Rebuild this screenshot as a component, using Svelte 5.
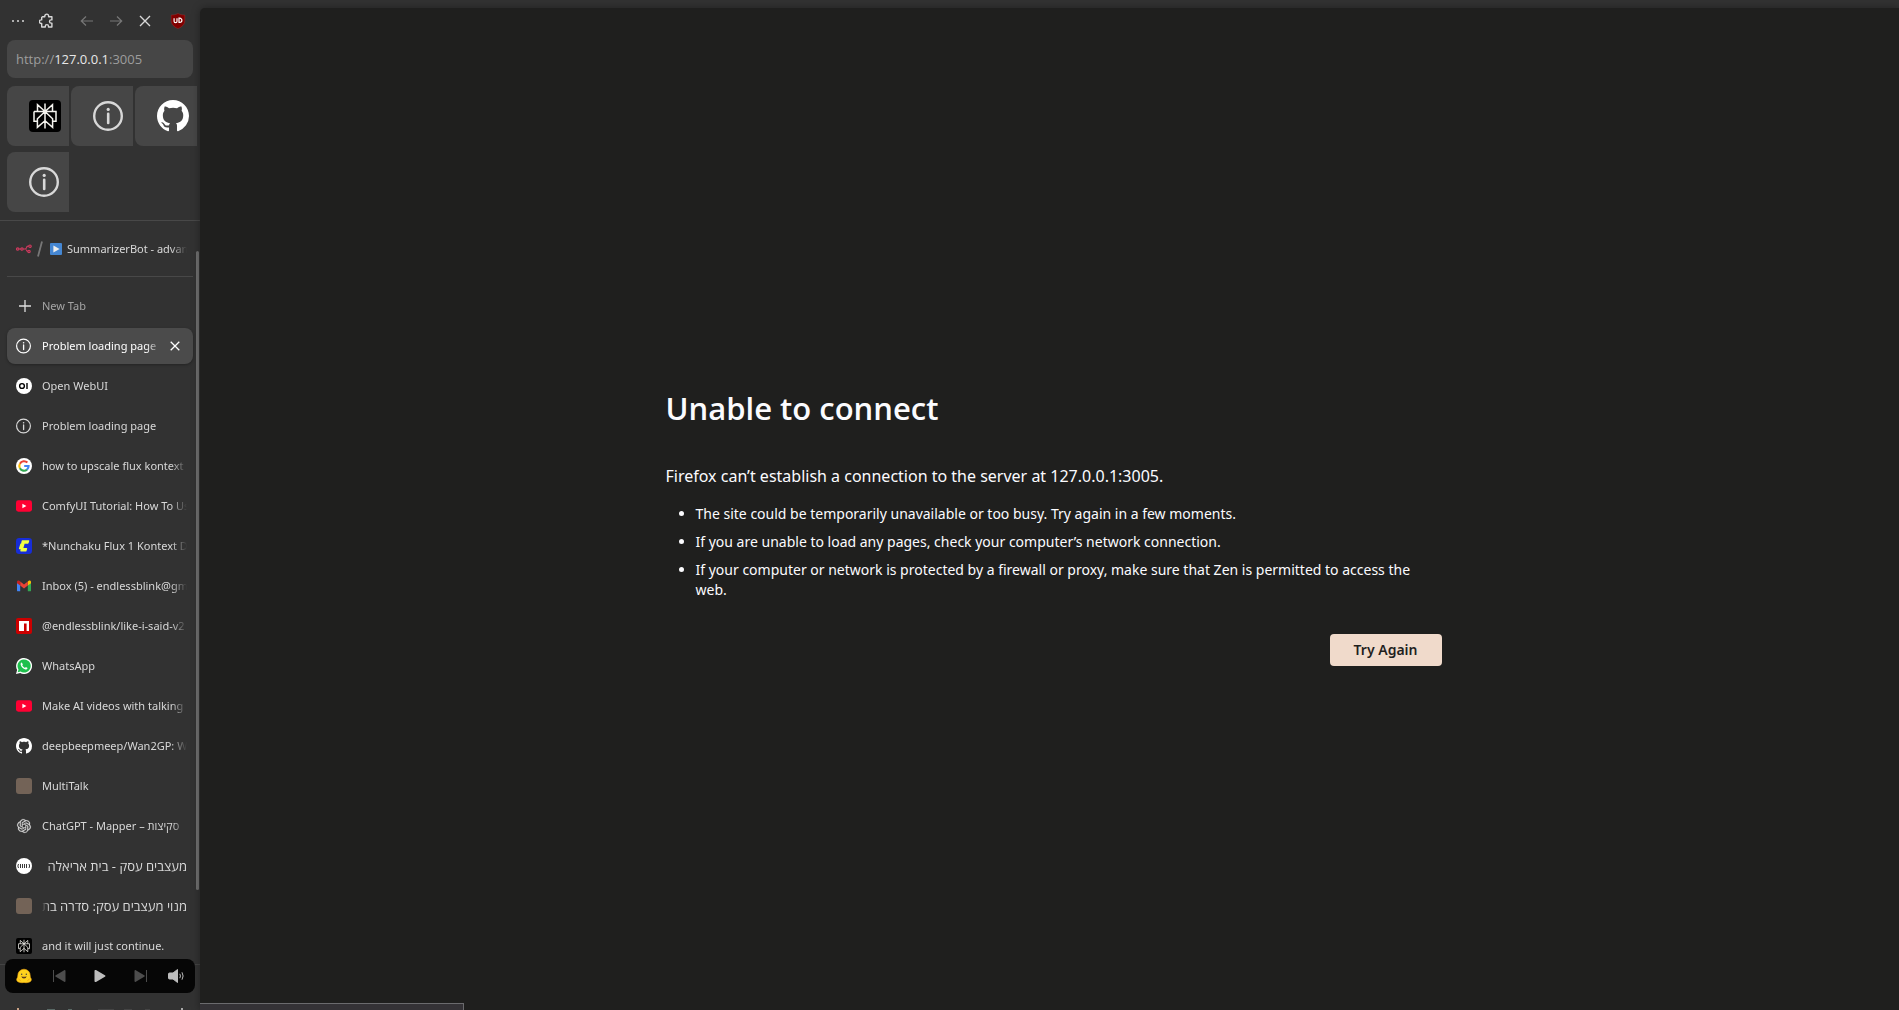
<script>
  const url = 'http://127.0.0.1:3005';
  let address = $state('');
  let editing = $state(false);

  const essentials = [
    { icon: 'perplexity', name: 'Perplexity' },
    { icon: 'info', name: 'Problem loading page' },
    { icon: 'github', name: 'GitHub' },
    { icon: 'info', name: 'Problem loading page' }
  ];

  const tabs = [
    { icon: 'info', title: 'Problem loading page', active: true },
    { icon: 'openwebui', title: 'Open WebUI' },
    { icon: 'info', title: 'Problem loading page' },
    { icon: 'google', title: 'how to upscale flux kontext' },
    { icon: 'youtube', title: 'ComfyUI Tutorial: How To Use' },
    { icon: 'comfy', title: '*Nunchaku Flux 1 Kontext Dev' },
    { icon: 'gmail', title: 'Inbox (5) - endlessblink@gmail' },
    { icon: 'npm', title: '@endlessblink/like-i-said-v2' },
    { icon: 'whatsapp', title: 'WhatsApp' },
    { icon: 'youtube', title: 'Make AI videos with talking' },
    { icon: 'github', title: 'deepbeepmeep/Wan2GP: Wan' },
    { icon: 'blank', title: 'MultiTalk' },
    { icon: 'openai', title: 'ChatGPT - Mapper – סקיצות' },
    { icon: 'library', title: 'מעצבים עסק - בית אריאלה', rtl: true },
    { icon: 'blank', title: 'מנוי מעצבים עסק: סדרה בת', rtl: true },
    { icon: 'perplexity', title: 'and it will just continue.' }
  ];
</script>

{#snippet icon(name)}
  {#if name === 'info'}
    <svg class="icon" viewBox="0 0 16 16" fill="none" stroke="currentColor" stroke-width="1.2" aria-hidden="true">
      <circle cx="7.5" cy="8" r="6.9" />
      <path d="M7.6 6.9v4.6" stroke-width="1.3" stroke-linecap="round" />
      <circle cx="7.6" cy="4.7" r=".8" fill="currentColor" stroke="none" />
    </svg>
  {:else if name === 'perplexity'}
    <svg class="icon" viewBox="0 0 32 32" fill="none" stroke="#f4f3ee" stroke-width="1.5" aria-hidden="true">
      <rect width="32" height="32" rx="4" fill="#000" stroke="none" />
      <path d="M16 3.5v25M16 11.5L8.5 4.8v6.7M16 11.5l7.5-6.7v6.7M5 11.5h22v9.8h-3.4M8.4 21.3H5v-9.8M16 11.5l-7.6 7.3v8.6l7.6-6.6M16 11.5l7.6 7.3v8.6L16 20.8" />
    </svg>
  {:else if name === 'github'}
    <svg class="icon" viewBox="0 0 16 16" fill="#fff" aria-hidden="true">
      <path d="M8 0C3.58 0 0 3.58 0 8c0 3.54 2.29 6.53 5.47 7.59.4.07.55-.17.55-.38 0-.19-.01-.82-.01-1.49-2.01.37-2.53-.49-2.69-.94-.09-.23-.48-.94-.82-1.13-.28-.15-.68-.52-.01-.53.63-.01 1.08.58 1.23.82.72 1.21 1.87.87 2.33.66.07-.52.28-.87.51-1.07-1.78-.2-3.64-.89-3.64-3.95 0-.87.31-1.59.82-2.15-.08-.2-.36-1.02.08-2.12 0 0 .67-.21 2.2.82.64-.18 1.32-.27 2-.27s1.36.09 2 .27c1.53-1.04 2.2-.82 2.2-.82.44 1.1.16 1.92.08 2.12.51.56.82 1.27.82 2.15 0 3.07-1.87 3.75-3.65 3.95.29.25.54.73.54 1.48 0 1.07-.01 1.93-.01 2.2 0 .21.15.46.55.38A8.01 8.01 0 0 0 16 8c0-4.42-3.58-8-8-8z" />
    </svg>
  {:else if name === 'openwebui'}
    <svg class="icon" viewBox="0 0 16 16" aria-hidden="true">
      <circle cx="8" cy="8" r="8" fill="#fff" />
      <circle cx="6" cy="8" r="2.4" fill="none" stroke="#000" stroke-width="1.4" />
      <path d="M11 5v6" stroke="#000" stroke-width="1.4" />
    </svg>
  {:else if name === 'google'}
    <svg class="icon" viewBox="0 0 16 16" fill="none" stroke-width="2.1" aria-hidden="true">
      <circle cx="8" cy="8" r="8" fill="#fff" />
      <path d="M11.4 4.6A4.7 4.7 0 0 0 3.9 5.7" stroke="#ea4335" />
      <path d="M3.9 5.7a4.7 4.7 0 0 0 0 4.6" stroke="#fbbc05" />
      <path d="M3.9 10.3a4.7 4.7 0 0 0 7.1 1.3" stroke="#34a853" />
      <path d="M11 11.6A4.7 4.7 0 0 0 12.6 8H8.2" stroke="#4285f4" />
    </svg>
  {:else if name === 'youtube'}
    <svg class="icon" viewBox="0 0 16 16" aria-hidden="true">
      <rect y="2.3" width="16" height="11.4" rx="2.4" fill="#ff0033" />
      <path d="M6.4 5.8v4.4L10.4 8z" fill="#fff" />
    </svg>
  {:else if name === 'comfy'}
    <svg class="icon" viewBox="0 0 16 16" aria-hidden="true">
      <rect width="16" height="16" rx="3.2" fill="#172dd7" />
      <path d="M6.3 2.2h6.4c.5 0 .7.3.6.7l-.7 2.2c-.1.4-.4.6-.8.6H8.6L7.4 10.1h3.2c.5 0 .7.3.6.7l-.7 2.2c-.1.4-.4.6-.8.6H5c-.6 0-.8-.3-.7-.8l.4-1.5H3.5c-.5 0-.7-.3-.6-.7L4.3 5.9c.1-.4.4-.5.8-.5l.5-2.5c.1-.4.3-.7.7-.7z" fill="#f0ff41" />
    </svg>
  {:else if name === 'gmail'}
    <svg class="icon" viewBox="0 0 16 16" aria-hidden="true">
      <path d="M1 4v8.4c0 .5.4.9.9.9h2.3V6.5z" fill="#4285f4" />
      <path d="M15 4v8.4c0 .5-.4.9-.9.9h-2.3V6.5z" fill="#34a853" />
      <path d="M11.8 3.6v4L15 5.2V4c0-1.4-1.5-1.9-2.5-1.1z" fill="#fbbc04" />
      <path d="M4.2 7.6v-4L8 6.5l3.8-2.9v4L8 10.5z" fill="#ea4335" />
      <path d="M1 4v1.2l3.2 2.4v-4l-.7-.7C2.5 2.1 1 2.6 1 4z" fill="#c5221f" />
    </svg>
  {:else if name === 'npm'}
    <svg class="icon" viewBox="0 0 16 16" aria-hidden="true">
      <rect width="16" height="16" rx="2" fill="#c00" />
      <path d="M3 3h10v10h-2.4V5.5H8V13H3z" fill="#fff" />
    </svg>
  {:else if name === 'whatsapp'}
    <svg class="icon" viewBox="0 0 16 16" aria-hidden="true">
      <path d="M0 16l1.1-4.1A8 8 0 1 1 4.2 15z" fill="#fff" />
      <path d="M1.7 14.3l.8-2.8a6.6 6.6 0 1 1 2.1 2.1z" fill="#1fc04d" />
      <path d="M5.8 4.5c-.9.3-1.4 1.2-1.1 2.2.7 2.4 2.3 4.1 4.8 4.8 1 .2 2-.5 2.1-1.5L9.8 9l-.8.9C7.7 9.3 6.8 8.4 6.2 7.2L6.9 6.4z" fill="#fff" />
    </svg>
  {:else if name === 'openai'}
    <svg class="icon" viewBox="-2 -2 28 28" fill="#d8d8d8" stroke="#d8d8d8" stroke-width=".4" aria-hidden="true">
      <path d="M22.2819 9.8211a5.9847 5.9847 0 0 0-.5157-4.9108 6.0462 6.0462 0 0 0-6.5098-2.9A6.0651 6.0651 0 0 0 4.9807 4.1818a5.9847 5.9847 0 0 0-3.9977 2.9 6.0462 6.0462 0 0 0 .7427 7.0966 5.98 5.98 0 0 0 .511 4.9107 6.051 6.051 0 0 0 6.5146 2.9001A5.9847 5.9847 0 0 0 13.2599 24a6.0557 6.0557 0 0 0 5.7718-4.2058 5.9894 5.9894 0 0 0 3.9977-2.9001 6.0557 6.0557 0 0 0-.7475-7.0729zm-9.022 12.6081a4.4755 4.4755 0 0 1-2.8764-1.0408l.1419-.0804 4.7783-2.7582a.7948.7948 0 0 0 .3927-.6813v-6.7369l2.02 1.1686a.071.071 0 0 1 .038.052v5.5826a4.504 4.504 0 0 1-4.4945 4.4944zm-9.6607-4.1254a4.4708 4.4708 0 0 1-.5346-3.0137l.142.0852 4.783 2.7582a.7712.7712 0 0 0 .7806 0l5.8428-3.3685v2.3324a.0804.0804 0 0 1-.0332.0615L9.74 19.9502a4.4992 4.4992 0 0 1-6.1408-1.6464zM2.3408 7.8956a4.485 4.485 0 0 1 2.3655-1.9728V11.6a.7664.7664 0 0 0 .3879.6765l5.8144 3.3543-2.0201 1.1685a.0757.0757 0 0 1-.071 0l-4.8303-2.7865A4.504 4.504 0 0 1 2.3408 7.872zm16.5963 3.8558L13.1038 8.364 15.1192 7.2a.0757.0757 0 0 1 .071 0l4.8303 2.7913a4.4944 4.4944 0 0 1-.6765 8.1042v-5.6772a.79.79 0 0 0-.407-.667zm2.0107-3.0231l-.142-.0852-4.7735-2.7818a.7759.7759 0 0 0-.7854 0L9.409 9.2297V6.8974a.0662.0662 0 0 1 .0284-.0615l4.8303-2.7866a4.4992 4.4992 0 0 1 6.6802 4.66zM8.3065 12.863l-2.02-1.1638a.0804.0804 0 0 1-.038-.0567V6.0742a4.4992 4.4992 0 0 1 7.3757-3.4537l-.142.0805L8.704 5.459a.7948.7948 0 0 0-.3927.6813zm1.0976-2.3654l2.602-1.4998 2.6069 1.4998v2.9994l-2.5974 1.4997-2.6067-1.4997Z" />
    </svg>
  {:else if name === 'library'}
    <svg class="icon" viewBox="0 0 16 16" fill="none" stroke="#222" stroke-width=".9" aria-hidden="true">
      <circle cx="8" cy="8" r="8" fill="#fff" stroke="none" />
      <path d="M4.5 6v4M6.5 6v4M8.5 6v4M10.5 6v4M2.5 6q-1.3 2 0 4M13 6q1.3 2 0 4" />
    </svg>
  {:else}
    <svg class="icon" viewBox="0 0 16 16" aria-hidden="true">
      <rect width="16" height="16" rx="3" fill="#736357" />
    </svg>
  {/if}
{/snippet}

<div class="browser">
  <aside class="sidebar">
    <div class="toolbar">
      <button class="tool" aria-label="Menu">
        <svg viewBox="0 0 16 16" fill="currentColor"><circle cx="3" cy="8" r="1" /><circle cx="8" cy="8" r="1" /><circle cx="13" cy="8" r="1" /></svg>
      </button>
      <button class="tool extensions" aria-label="Extensions">
        <svg viewBox="0 0 16 16" fill="none" stroke="currentColor" stroke-width="1.4" stroke-linejoin="round">
          <path d="M3.5 3.7h2.3V3a1.9 1.9 0 0 1 3.8 0v.7h3.3v3.2h-.8a1.6 1.6 0 0 0 0 3.2h.8v3.9H9.5v-.8a1.6 1.6 0 0 0-3.2 0v.8H2.7v-3.5H2.2a1.8 1.8 0 0 1 0-3.6h.5V4.5z" />
        </svg>
      </button>
      <button class="tool dim" aria-label="Back">
        <svg viewBox="0 0 16 16" fill="none" stroke="currentColor" stroke-width="1.2"><path d="M14 8H2.5M7 3.5L2.3 8 7 12.5" /></svg>
      </button>
      <button class="tool dim" aria-label="Forward">
        <svg viewBox="0 0 16 16" fill="none" stroke="currentColor" stroke-width="1.2"><path d="M2 8h11.5M9 3.5L13.7 8 9 12.5" /></svg>
      </button>
      <button class="tool" aria-label="Stop">
        <svg viewBox="0 0 16 16" fill="none" stroke="currentColor" stroke-width="1.4"><path d="M3 3l10 10M13 3L3 13" /></svg>
      </button>
      <button class="tool ublock" aria-label="uBlock Origin">
        <svg viewBox="0 0 16 16">
          <path d="M8 .4C6.2 1.6 3.8 2 1.2 2v5.5c0 4 2.8 6.4 6.8 8.1 4-1.7 6.8-4.1 6.8-8.1V2C12.2 2 9.8 1.6 8 .4z" fill="#800000" stroke="#a33" stroke-width=".4" />
          <path d="M4.1 5.2v3a1.3 1.3 0 0 0 2.9 0v-3M9 5.2v4.2h.8a2.1 2.1 0 0 0 0-4.2z" fill="none" stroke="#fff" stroke-width="1.2" />
        </svg>
      </button>
    </div>

    <div class="address">
      <input
        aria-label="Address"
        bind:value={address}
        onfocus={() => { editing = true; address = url; }}
        onblur={() => { editing = false; address = ''; }}
      />
      {#if !editing}
        <span class="shown">http://<b>127.0.0.1</b>:3005</span>
      {/if}
    </div>

    <div class="essentials">
      {#each essentials as item}
        <button class="essential" aria-label={item.name}>{@render icon(item.icon)}</button>
      {/each}
    </div>

    <div class="pinned">
      <button class="tab">
        <svg class="icon" viewBox="0 0 16 16" fill="none" stroke="#cf3a5e" stroke-width="1.2" aria-hidden="true">
          <circle cx="1.7" cy="8" r="1.2" /><circle cx="6" cy="8" r="1.2" />
          <path d="M2.9 8h1.9M7.2 8h1.8q1.2 0 1.5-1.3.3-1.5 1.5-1.5h.8M9 8q1.2 0 1.5 1.2.3 1.2 1.3 1.2" />
          <circle cx="14" cy="5.2" r="1.2" /><circle cx="13" cy="10.5" r="1.2" />
        </svg>
        <svg class="slash" viewBox="0 0 6 16" fill="none" stroke="#777" stroke-width="1.8" aria-hidden="true"><path d="M5 .5L1 15.5" /></svg>
        <svg class="play-badge" viewBox="0 0 12 12" aria-hidden="true"><rect width="12" height="12" rx="1" fill="#4587d3" /><path d="M3.4 2.5v7L9.6 6z" fill="#eee" /></svg>
        <span class="title">SummarizerBot - advanced</span>
      </button>
    </div>

    <div class="tabs">
      <button class="tab new-tab">
        <svg class="icon" viewBox="0 0 16 16" fill="none" stroke="#ddd" stroke-width="1.3" aria-hidden="true"><path d="M9 2v12M3 8h12" /></svg>
        <span class="title">New Tab</span>
      </button>
      {#each tabs as tab}
        <div class="row" class:active={tab.active}>
          <button class="tab">
            {@render icon(tab.icon)}
            <span class="title" class:rtl={tab.rtl} dir={tab.rtl ? 'rtl' : 'ltr'}>{tab.title}</span>
          </button>
          {#if tab.active}
            <button class="close" aria-label="Close tab">
              <svg viewBox="0 0 10 10" fill="none" stroke="currentColor" stroke-width="1.3"><path d="M.7.7l8.6 8.6M9.3.7L.7 9.3" /></svg>
            </button>
          {/if}
        </div>
      {/each}
    </div>

    <div class="footer">
      <svg viewBox="0 0 200 4" aria-hidden="true">
        <path d="M17 2h2v2h-2z" fill="#c9a184" />
        <path d="M47 3h8v1h-8zM68 3h4v1h-4z" fill="#5a6a66" />
        <path d="M98 3h16v1H98zM124 3h8v1h-8zM145 3h5v1h-5z" fill="#444" />
        <path d="M181 2h2v2h-2z" fill="#aaa" />
      </svg>
    </div>

    <div class="scrollbar"></div>

    <div class="player">
      <button aria-label="Playing tab">
        <svg viewBox="0 0 16 16">
          <path d="M8 1.2a6.2 6.2 0 0 1 6.2 6.3c0 1.5.2 2 .9 3 .7 1.3 0 2.9-1.6 3.5-1.7.7-3.6.9-5.5.4-1.9.5-3.8.3-5.5-.4C.9 13.4.2 11.8.9 10.5c.7-1 .9-1.5.9-3A6.2 6.2 0 0 1 8 1.2z" fill="#ffd21e" stroke="#f5a913" stroke-width=".6" />
          <path d="M5.4 8.3q2.6 1 5.2 0Q10.4 10.5 8 10.5T5.4 8.3z" fill="#5b3a20" />
          <circle cx="5.7" cy="6.2" r=".7" fill="#3a3b45" /><circle cx="10.3" cy="6.2" r=".7" fill="#3a3b45" />
          <path d="M2.3 10.6l2.5 2.6M13.7 10.6l-2.5 2.6" stroke="#f59b13" stroke-width=".8" />
        </svg>
      </button>
      <div class="transport">
        <button class="off" aria-label="Previous">
          <svg viewBox="0 0 16 16" fill="currentColor"><path d="M2 2h1v12H2zM14.5 3v10c0 .8-.7 1.1-1.3.7L4.8 8.8c-.7-.4-.7-1.2 0-1.6l8.4-4.9c.6-.4 1.3-.1 1.3.7z" /></svg>
        </button>
        <button aria-label="Play">
          <svg viewBox="0 0 16 16" fill="currentColor"><path d="M2.5 3v10c0 .9.8 1.3 1.5.9l8.900-5.100c.7-.4.7-1.200 0-1.600L4 2.100c-.7-.4-1.500 0-1.500.9z" /></svg>
        </button>
        <button class="off" aria-label="Next">
          <svg viewBox="0 0 16 16" fill="currentColor"><path d="M13 2h1v12h-1zM1.500 3v10c0 .8.7 1.100 1.300.7l8.400-4.900c.7-.4.7-1.200 0-1.600L2.800 2.300c-.6-.4-1.300-.1-1.300.7z" /></svg>
        </button>
      </div>
      <button aria-label="Mute">
        <svg viewBox="0 0 16 16" fill="none" stroke="currentColor"><path d="M9.5 1.5v13L5 11H1.5Q.5 11 .5 10V6q0-1 1-1H5z" fill="currentColor" stroke-linejoin="round" /><path d="M11.8 5.8q1.3 2.2 0 4.4M14 4.3q2.2 3.7 0 7.4" /></svg>
      </button>
    </div>
  </aside>

  <main class="page">
    <section class="error">
      <h1>Unable to connect</h1>
      <p>Firefox can’t establish a connection to the server at 127.0.0.1:3005.</p>
      <ul>
        <li>The site could be temporarily unavailable or too busy. Try again in a few moments.</li>
        <li>If you are unable to load any pages, check your computer’s network connection.</li>
        <li>If your computer or network is protected by a firewall or proxy, make sure that Zen is permitted to access the web.</li>
      </ul>
      <button class="retry">Try Again</button>
    </section>
    <div class="status"></div>
  </main>
</div>

<style>
  :global(body) {
    margin: 0;
    background: #323232;
  }
  .browser {
    display: flex;
    height: 100vh;
    overflow: hidden;
    background: #323232;
    font-family: 'Noto Sans', 'Open Sans', 'Liberation Sans', sans-serif;
    font-size: 11px;
    color: #d8d8d8;
  }
  button {
    border: 0;
    padding: 0;
    margin: 0;
    background: none;
    color: inherit;
    font: inherit;
    text-align: start;
  }
  svg {
    display: block;
    flex: none;
  }

  .sidebar {
    position: relative;
    box-sizing: border-box;
    flex: 0 0 200px;
    display: flex;
    flex-direction: column;
    overflow: hidden;
  }
  .toolbar {
    display: flex;
    align-items: center;
    flex: none;
    gap: 13px;
    height: 40px;
    padding: 2px 14px 0 10px;
    box-sizing: border-box;
  }
  .tool svg {
    width: 16px;
    height: 16px;
  }
  .extensions {
    margin-right: 11px;
  }
  .ublock {
    margin-left: auto;
  }
  .dim {
    color: #777;
  }

  .address {
    display: grid;
    flex: none;
    height: 38px;
    margin: 0 7px 8px;
    border-radius: 8px;
    background: #464646;
    align-items: center;
    font-family: 'Open Sans', 'Noto Sans', sans-serif;
    font-size: 13px;
  }
  .address input,
  .shown {
    grid-area: 1 / 1;
    padding: 0 9px;
  }
  .address input {
    min-width: 0;
    height: 100%;
    box-sizing: border-box;
    border: 0;
    outline: 0;
    background: none;
    color: #e8e8e8;
    font: inherit;
  }
  .shown {
    color: #9d9d9d;
    pointer-events: none;
  }
  .shown b {
    font-weight: 400;
    color: #e8e8e8;
  }

  .essentials {
    display: grid;
    flex: none;
    grid-template-columns: repeat(3, 1fr);
    gap: 6px 2px;
    padding: 0 3px 8px 7px;
    border-bottom: 1px solid #484848;
  }
  .essential {
    display: flex;
    align-items: center;
    height: 60px;
    padding-left: 22px;
    border-radius: 8px 0 0 8px;
    background: #464646;
  }
  .essential .icon {
    width: 32px;
    height: 32px;
  }

  .pinned {
    flex: none;
    margin: 0 7px;
    padding: 10px 0 9px;
    border-bottom: 1px solid #484848;
  }
  .tab {
    display: flex;
    align-items: center;
    flex: 1;
    min-width: 0;
    height: 36px;
    padding: 0 6px 0 9px;
    gap: 10px;
  }
  .pinned .tab {
    width: 100%;
    gap: 5px;
  }
  .slash {
    width: 6px;
    height: 16px;
  }
  .play-badge {
    width: 12px;
    height: 12px;
    margin-left: 2px;
  }
  .icon {
    width: 16px;
    height: 16px;
  }
  .title {
    flex: 1;
    min-width: 0;
    overflow: hidden;
    white-space: nowrap;
    line-height: 20px;
    mask-image: linear-gradient(to left, transparent, #000 16px);
  }
  .title.rtl {
    font-size: 13px;
    mask-image: linear-gradient(to right, transparent, #000 8px);
  }
  .tabs {
    display: flex;
    flex: 1;
    flex-direction: column;
    gap: 4px;
    min-height: 0;
    padding: 11px 7px 0;
    overflow: hidden;
  }
  .new-tab {
    flex: none;
    color: #a5a5a5;
  }
  .row {
    display: flex;
    flex: none;
    align-items: center;
    border-radius: 8px;
  }
  .active {
    background: #4b4b4b;
    color: #fff;
    box-shadow: 0 1px 3px rgb(0 0 0 / 30%);
  }
  .active .tab {
    padding-right: 4px;
  }
  .close {
    padding: 4px 13px 4px 4px;
  }
  .close svg {
    width: 10px;
    height: 10px;
  }
  .footer {
    display: flex;
    flex: none;
    align-items: flex-end;
    height: 45px;
    border-top: 1px solid #444;
  }
  .footer svg {
    width: 200px;
    height: 4px;
  }
  .scrollbar {
    position: absolute;
    top: 251px;
    right: 1px;
    bottom: 120px;
    width: 3px;
    border-radius: 2px;
    background: #6f6f6f;
  }
  .player {
    position: absolute;
    left: 5px;
    right: 5px;
    bottom: 17px;
    display: flex;
    align-items: center;
    justify-content: space-between;
    height: 34px;
    box-sizing: border-box;
    padding: 0 11px;
    border-radius: 8px;
    background: #060606;
    color: #bdbdbd;
  }
  .transport {
    display: flex;
    gap: 25px;
  }
  .player svg {
    width: 16px;
    height: 16px;
  }
  .off {
    color: #4d4d4d;
  }

  .page {
    position: relative;
    display: flex;
    flex: 1;
    flex-direction: column;
    align-items: center;
    justify-content: center;
    min-width: 0;
    margin-top: 8px;
    padding: 36px 0 0 8px;
    border-radius: 5px 0 0 0;
    background: #1f1f1e;
    box-shadow: 0 0 8px rgb(0 0 0 / 35%);
    color: #fbfbfe;
  }
  .error {
    display: flex;
    flex-direction: column;
    width: 100%;
    max-width: 776px;
  }
  h1 {
    margin: 0 0 36px;
    font-family: 'Open Sans', 'Noto Sans', sans-serif;
    font-size: 31px;
    font-weight: 600;
    line-height: 40px;
  }
  p {
    margin: 0 0 16px;
    font-size: 16px;
    line-height: 24px;
  }
  ul {
    margin: 0;
    padding-left: 30px;
    font-size: 14px;
    line-height: 20px;
  }
  li {
    margin-bottom: 8px;
  }
  .retry {
    align-self: flex-end;
    margin-top: 26px;
    padding: 0 24px;
    border-radius: 4px;
    background: #f0dacb;
    color: #1f1f1e;
    font-size: 14px;
    font-weight: 600;
    line-height: 32px;
  }
  .status {
    position: absolute;
    left: 0;
    bottom: 0;
    box-sizing: border-box;
    width: 264px;
    height: 7px;
    border: solid #6b6b6e;
    border-width: 1px 1px 0 0;
    background: #343236;
  }
</style>
